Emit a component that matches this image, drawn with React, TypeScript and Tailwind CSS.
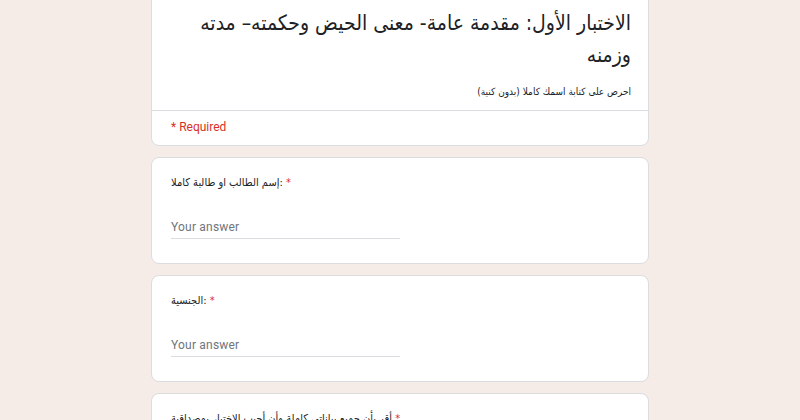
import React from "react";

const arabicFont = { fontFamily: '"DejaVu Sans Condensed", "DejaVu Sans", sans-serif' };

function Question({ label }: { label: string }) {
  return (
    <div className="bg-white rounded-lg border border-[#dadce0] pt-[17px] px-[19px] pb-[24px]">
      <div className="h-[16px] text-[11px] leading-[16px] text-[#202124] whitespace-nowrap" style={arabicFont}>
        <span>{label}</span>
        <span className="text-[#d93025]"> *</span>
      </div>
      <div className="mt-[24px] w-1/2 h-[24px] border-b border-[#dadce0] flex items-center">
        <span className="text-[12px] text-[#70757a] font-['Roboto',sans-serif] tracking-[0.2px]">Your answer</span>
      </div>
    </div>
  );
}

export default function App() {
  return (
    <div className="w-[800px] h-[420px] overflow-hidden bg-[#f6ece7]">
      <div className="w-[498px] mx-auto -mt-[18px] flex flex-col gap-[11px]">
        <div className="bg-white rounded-lg border border-[#dadce0]">
          <div className="pt-[24px] px-[17px] pb-[10px]" dir="rtl">
            <div className="text-[21px] leading-[32px] text-[#202124]" style={arabicFont}>
              الاختبار الأول: مقدمة عامة- معنى الحيض وحكمته– مدته
              <br />
              وزمنه
            </div>
            <div className="mt-[13px] text-[10px] leading-[16px] text-[#202124]" style={arabicFont}>
              احرص على كتابة اسمك كاملا (بدون كنية)
            </div>
          </div>
          <div className="border-t border-[#dadce0] pt-[8px] pb-[10px] px-[19px] text-[12px] leading-[16px] font-['Roboto',sans-serif]">
            <span className="text-[#d93025]">* Required</span>
          </div>
        </div>
        <Question label="إسم الطالب او طالبة كاملا:" />
        <Question label="الجنسية:" />
        <div className="bg-white rounded-lg border border-[#dadce0] pt-[17px] px-[19px] pb-[24px] h-[106px]">
          <div className="h-[16px] text-[11px] leading-[16px] text-[#202124] whitespace-nowrap" style={arabicFont}>
            <span>أقر بأن جميع بياناتي كاملة وأن أجيب الاختبار بمصداقية</span>
            <span className="text-[#d93025]"> *</span>
          </div>
        </div>
      </div>
    </div>
  );
}
